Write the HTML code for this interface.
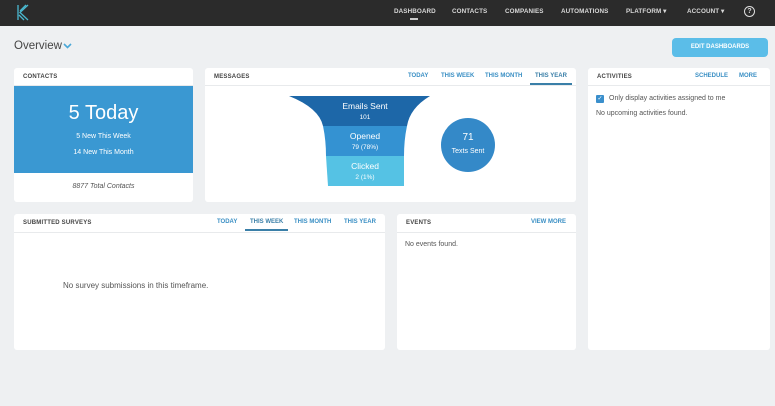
<!DOCTYPE html>
<html><head><meta charset="utf-8"><style>
*{box-sizing:border-box;margin:0;padding:0}
body{width:775px;height:406px;background:#eef0f2;font-family:"Liberation Sans",sans-serif;position:relative;overflow:hidden;color:#555}
.nav{position:absolute;left:0;top:0;width:775px;height:26px;background:#2b2b2b}
.nav span{position:absolute;top:8px;font-size:6.3px;font-weight:bold;color:#d8d8d8;letter-spacing:.1px}
.card{position:absolute;background:#fff;border-radius:3px}
.hd{height:18px;border-bottom:1px solid #e8eaec;position:relative}
.hd b{position:absolute;left:9px;top:6px;font-size:6px;color:#444;letter-spacing:.2px}
.tab{position:absolute;top:5px;font-size:6px;color:#3a8fc4;font-weight:bold}
.act{border-bottom:2px solid #3a7fa8;padding:0 5px 4px;margin-left:-5px;color:#3a7fa8}
.t{position:absolute;font-size:7px;color:#555}
</style></head><body>
<div class="nav">
<svg style="position:absolute;left:15px;top:3px" width="16" height="19" viewBox="0 0 16 19"><g stroke="#4ab8cf" stroke-width="1.3" fill="none"><path d="M3 2v15"/><path d="M13 2L5 9.5 13 17"/><path d="M11 2L5 8"/><path d="M9 17L4 12"/></g></svg>
<span style="left:394px">DASHBOARD</span><div style="position:absolute;left:410px;top:18px;width:8px;height:1.5px;background:#ccc"></div>
<span style="left:452px">CONTACTS</span><span style="left:505px">COMPANIES</span><span style="left:561px">AUTOMATIONS</span><span style="left:626px">PLATFORM ▾</span><span style="left:687px">ACCOUNT ▾</span>
<div style="position:absolute;left:744px;top:6px;width:11px;height:11px;border:1.3px solid #ddd;border-radius:50%;color:#ddd;font-size:7px;font-weight:bold;text-align:center;line-height:9px">?</div>
</div>
<div style="position:absolute;left:14px;top:40px;font-size:11.5px;color:#444">Overview</div>
<svg style="position:absolute;left:63px;top:43px" width="9" height="6"><path d="M1 1L4.5 4.5 8 1" stroke="#4aa8d8" stroke-width="1.6" fill="none"/></svg>
<div style="position:absolute;left:672px;top:38px;width:96px;height:19px;background:#5bbde8;border-radius:4px;color:#fff;font-size:6px;font-weight:bold;text-align:center;line-height:19px">EDIT DASHBOARDS</div>

<div class="card" style="left:14px;top:68px;width:179px;height:134px">
<div class="hd"><b>CONTACTS</b></div>
<div style="position:absolute;left:0;top:18px;width:179px;height:87px;background:#3a98d2;color:#fff;text-align:center">
<div style="font-size:20px;margin-top:16px">5 Today</div>
<div style="font-size:7px;margin-top:8px">5 New This Week</div>
<div style="font-size:7px;margin-top:9px">14 New This Month</div></div>
<div class="t" style="left:0;width:179px;text-align:center;top:115px;font-style:italic">8877 Total Contacts</div>
</div>

<div class="card" style="left:205px;top:68px;width:371px;height:134px">
<div class="hd"><b>MESSAGES</b>
<span class="tab" style="left:203px">TODAY</span><span class="tab" style="left:236px">THIS WEEK</span><span class="tab" style="left:280px">THIS MONTH</span><span class="tab act" style="left:330px">THIS YEAR</span></div>
<svg style="position:absolute;left:0;top:0" width="371" height="134">
<path d="M84 28H225Q205 40 202 58H118Q114 40 84 28Z" fill="#1d67a8"/>
<path d="M118 58H202Q199 72 199 88H121Q121 72 118 58Z" fill="#3492d2"/>
<path d="M121 88H199V118H123Z" fill="#55c2e4"/>
<circle cx="263" cy="77" r="27" fill="#3489c8"/>
<g fill="#fff" font-family="Liberation Sans" text-anchor="middle">
<text x="160" y="41" font-size="8.5">Emails Sent</text><text x="160" y="51" font-size="6.5">101</text>
<text x="160" y="71" font-size="8.5">Opened</text><text x="160" y="81" font-size="6.5">79 (78%)</text>
<text x="160" y="101" font-size="8.5">Clicked</text><text x="160" y="111" font-size="6.5">2 (1%)</text>
<text x="263" y="72" font-size="10">71</text><text x="263" y="85" font-size="7">Texts Sent</text></g>
</svg></div>

<div class="card" style="left:588px;top:68px;width:182px;height:282px">
<div class="hd"><b>ACTIVITIES</b><span class="tab" style="left:107px">SCHEDULE</span><span class="tab" style="left:151px">MORE</span></div>
<div style="position:absolute;left:8px;top:27px;width:8px;height:8px;background:#3a8fcc;border-radius:1px;color:#fff;font-size:6px;line-height:8px;text-align:center">✓</div>
<div class="t" style="left:21px;top:27px">Only display activities assigned to me</div>
<div class="t" style="left:8px;top:42px">No upcoming activities found.</div>
</div>

<div class="card" style="left:14px;top:214px;width:371px;height:136px">
<div class="hd" style="height:19px"><b>SUBMITTED SURVEYS</b>
<span class="tab" style="left:203px">TODAY</span><span class="tab act" style="left:236px">THIS WEEK</span><span class="tab" style="left:280px">THIS MONTH</span><span class="tab" style="left:330px">THIS YEAR</span></div>
<div class="t" style="left:49px;top:67px;font-size:8px">No survey submissions in this timeframe.</div>
</div>

<div class="card" style="left:397px;top:214px;width:179px;height:136px">
<div class="hd" style="height:19px"><b>EVENTS</b><span class="tab" style="left:134px">VIEW MORE</span></div>
<div class="t" style="left:8px;top:27px">No events found.</div>
</div>
</body></html>
